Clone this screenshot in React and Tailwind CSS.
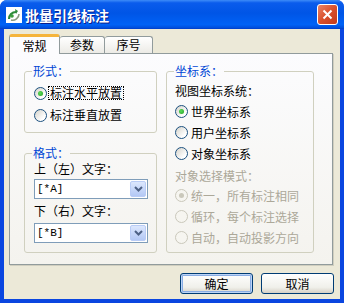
import React from "react";

const Radio = ({ label, checked, disabled, focused, row = "h-[21px]" }) => (
  <div className={`flex items-center ${row}`}>
    <span
      className={`w-[13px] h-[13px] rounded-full border flex items-center justify-center shrink-0 ${
        disabled
          ? "border-[#CAC8BB] bg-[#F6F5F0]"
          : "border-[#1C5180] bg-[linear-gradient(135deg,#D4D2CA,#FFFFFF_75%)]"
      }`}
    >
      {checked && (
        <span
          className={`w-[5px] h-[5px] rounded-full ${
            disabled ? "bg-[#CAC8BB]" : "bg-[radial-gradient(circle_at_40%_40%,#5CDB5C,#21A121)]"
          }`}
        />
      )}
    </span>
    <span
      className={`ml-[2px] px-[1px] text-[12px] leading-[12px] whitespace-nowrap ${
        disabled ? "text-[#ACA899]" : "text-black"
      } ${focused ? "outline-1 outline-dotted outline-black" : ""}`}
    >
      {label}
    </span>
  </div>
);

const Group = ({ title, className, children }) => (
  <fieldset className={`border border-[#D0D0BF] rounded-[3px] ${className}`}>
    <legend className="ml-[7px] px-[1px] text-[12px] leading-[12px] text-[#0046D5]">{title}</legend>
    {children}
  </fieldset>
);

const Combo = ({ value }) => (
  <div className="w-[114px] h-[20px] border border-[#7F9DB9] bg-white flex items-center">
    <span className="flex-1 pl-[2px] font-['Liberation_Mono',monospace] text-[11px] leading-[12px] text-black">
      {value}
    </span>
    <span className="w-[16px] h-[16px] mr-[1px] rounded-[2px] border border-[#B9CCF6] bg-[linear-gradient(#DCE7FD,#B3C8F5)] flex items-center justify-center">
      <svg width="9" height="6" viewBox="0 0 9 6">
        <path d="M1 1l3.5 3.5L8 1" stroke="#4D6185" strokeWidth="2" fill="none" />
      </svg>
    </span>
  </div>
);

const Button = ({ label, primary }) => (
  <button
    className={`w-[73px] h-[21px] rounded-[3px] border border-[#003C74] bg-[linear-gradient(#FFFFFF,#F0F0EA_70%,#D6D0C5)] text-[12px] leading-[12px] text-black ${
      primary ? "shadow-[inset_0_0_0_1px_#BCD4F6,inset_0_0_0_2px_#89ADE4]" : ""
    }`}
  >
    {label}
  </button>
);

const App = () => {
  return (
    <div className="w-[344px] h-[303px] rounded-t-[7px] bg-[#0A46E0] flex flex-col overflow-hidden font-['Noto_Sans_CJK_SC','Noto_Sans',sans-serif]">
      {/* title bar */}
      <div className="h-[29px] shrink-0 flex items-center pl-[6px] pr-[6px] bg-[linear-gradient(#3D8CF8_0%,#0A5CEC_10%,#0055E6_45%,#0062F6_85%,#0050DE_95%,#003DC8_100%)]">
        <svg width="16" height="16" viewBox="0 0 16 16" className="shrink-0">
          <rect x="0" y="0" width="16" height="16" fill="#FFFFFF" />
          <path d="M3 12c0-4 3-7 7-7" stroke="#2E8B3A" strokeWidth="2.2" fill="none" />
          <path d="M5 13c4 1 8-2 8-6" stroke="#8A9A80" strokeWidth="1.6" fill="none" />
          <path d="M9 2l3 2-2 3z" fill="#2E8B3A" />
          <circle cx="6" cy="9" r="1.8" fill="#3C9E3C" />
        </svg>
        <span className="ml-[3px] text-white font-bold text-[14px] leading-[16px] [text-shadow:1px_1px_0_#0A1E8C]">
          批量引线标注
        </span>
        <div className="flex-1" />
        <div className="w-[21px] h-[21px] rounded-[3px] border border-white bg-[linear-gradient(135deg,#EA8468,#D9502C_50%,#C23A1C)] flex items-center justify-center">
          <svg width="11" height="11" viewBox="0 0 11 11">
            <path d="M1.5 1.5l8 8M9.5 1.5l-8 8" stroke="#FFFFFF" strokeWidth="2" />
          </svg>
        </div>
      </div>

      {/* client */}
      <div className="flex-1 mx-[4px] mb-[4px] bg-[#ECE9D8] flex flex-col">
        {/* tabs */}
        <div className="h-[24px] shrink-0 flex items-end pl-[5px] text-[12px] leading-[12px]">
          <div className="relative z-10 -mb-px w-[51px] h-[20px] rounded-t-[3px] border-x border-[#919B9C] border-t-[3px] border-t-[#F5B43C] bg-[#FCFCFE] flex items-center justify-center text-black">
            常规
          </div>
          <div className="w-[45px] h-[17px] rounded-t-[3px] border border-b-0 border-[#919B9C] border-l-0 bg-[linear-gradient(#FFFFFF,#ECEBE6)] flex items-center justify-center text-black">
            参数
          </div>
          <div className="w-[48px] h-[17px] rounded-t-[3px] border border-b-0 border-[#919B9C] border-l-0 bg-[linear-gradient(#FFFFFF,#ECEBE6)] flex items-center justify-center text-black">
            序号
          </div>
        </div>

        {/* panel */}
        <div className="ml-[5px] w-[324px] h-[212px] shrink-0 border border-[#919B9C] bg-[linear-gradient(#FCFCFE,#F4F3EE)] shadow-[1px_1px_0_#D0CEBF] flex pl-[14px] pt-[11px]">
          <div className="w-[133px] flex flex-col">
            <Group title="形式：" className="h-[68px]">
              <div className="pl-[9px] pt-[5px]">
                <Radio label="标注水平放置" checked focused row="h-[22px]" />
                <Radio label="标注垂直放置" row="h-[22px]" />
              </div>
            </Group>
            <Group title="格式：" className="h-[106px] mt-[14px]">
              <div className="pl-[9px] pt-[4px] text-[12px] leading-[12px] text-black">
                <div>上（左）文字：</div>
                <div className="mt-[4px]">
                  <Combo value="[*A]" />
                </div>
                <div className="mt-[6px]">下（右）文字：</div>
                <div className="mt-[6px]">
                  <Combo value="[*B]" />
                </div>
              </div>
            </Group>
          </div>

          <Group title="坐标系：" className="w-[148px] h-[188px] ml-[9px]">
            <div className="pl-[8px] pt-[8px] text-[12px] leading-[12px]">
              <div className="text-black">视图坐标系统：</div>
              <div className="mt-[4px]">
                <Radio label="世界坐标系" checked />
                <Radio label="用户坐标系" />
                <Radio label="对象坐标系" />
              </div>
              <div className="mt-[6px] text-[#ACA899]">对象选择模式：</div>
              <div className="mt-[3px]">
                <Radio label="统一，所有标注相同" checked disabled />
                <Radio label="循环，每个标注选择" disabled />
                <Radio label="自动，自动投影方向" disabled />
              </div>
            </div>
          </Group>
        </div>

        {/* buttons */}
        <div className="mt-[8px] flex justify-end gap-[8px] pr-[6px]">
          <Button label="确定" primary />
          <Button label="取消" />
        </div>
      </div>
    </div>
  );
};

export default App;
